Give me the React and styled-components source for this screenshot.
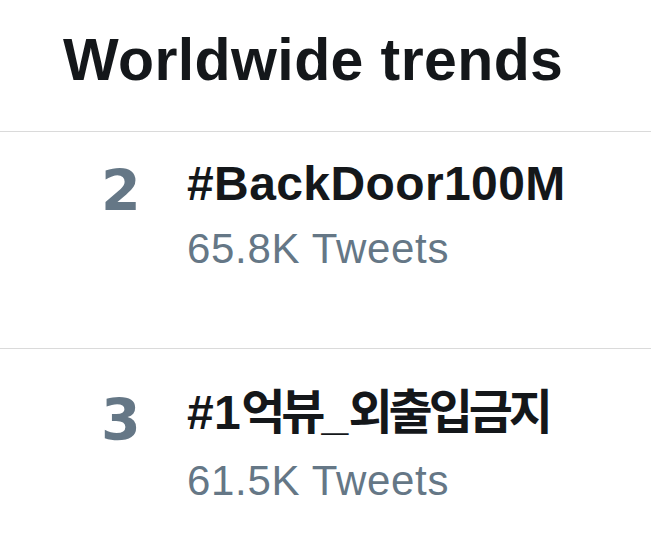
import React from "react";
import styled, { createGlobalStyle } from "styled-components";

const GlobalStyle = createGlobalStyle`
  html, body {
    margin: 0;
    padding: 0;
    background: #ffffff;
  }
  body {
    font-family: "Liberation Sans", "Noto Sans CJK KR", Arial, sans-serif;
    -webkit-font-smoothing: antialiased;
  }
`;

const Page = styled.div`
  width: 651px;
  min-height: 559px;
  background: #ffffff;
  overflow: hidden;
`;

const Header = styled.header`
  padding: 26px 0 37px 63px;
  border-bottom: 1px solid #dadada;
`;

const Title = styled.h1`
  margin: 0;
  font-family: "Liberation Sans", Arial, sans-serif;
  font-weight: 700;
  font-size: 59px;
  line-height: normal;
  color: #14171a;
  letter-spacing: 0.4px;
`;

const TrendRow = styled.div`
  display: flex;
  align-items: baseline;
  padding: 24px 0 75px 101px;
  border-bottom: 1px solid #dadada;
`;

const Rank = styled.div`
  flex: none;
  width: 86px;
  font-family: "DejaVu Sans", "Liberation Sans", sans-serif;
  font-weight: 700;
  font-size: 57px;
  line-height: 40px;
  color: #657786;
`;

const RankDigit = styled.span`
  vertical-align: -11px;
`;

const TrendBody = styled.div`
  display: flex;
  flex-direction: column;
`;

const Hashtag = styled.div`
  font-family: "Liberation Sans", "Noto Sans CJK KR", sans-serif;
  font-weight: 700;
  font-size: 48px;
  line-height: normal;
  letter-spacing: 0.4px;
  color: #14171a;
  white-space: nowrap;
`;

const Hangul = styled.span`
  font-family: "Noto Sans CJK KR", sans-serif;
  font-weight: 700;
  letter-spacing: -0.085em;
`;

const TweetCount = styled.div`
  margin-top: 14px;
  font-family: "Liberation Sans", Arial, sans-serif;
  font-weight: 400;
  font-size: 42px;
  line-height: normal;
  color: #657786;
  letter-spacing: 0.7px;
`;

const trends = [
  { rank: 2, tag: ["#BackDoor100M"], count: "65.8K Tweets" },
  {
    rank: 3,
    tag: ["#1", { k: "억뷰" }, "_", { k: "외출입금지" }],
    count: "61.5K Tweets",
  },
];

export default function App() {
  return (
    <Page>
      <GlobalStyle />
      <Header>
        <Title>Worldwide trends</Title>
      </Header>
      {trends.map((t) => (
        <TrendRow key={t.rank}>
          <Rank>
            <RankDigit>{t.rank}</RankDigit>
          </Rank>
          <TrendBody>
            <Hashtag>
              {t.tag.map((part, i) =>
                typeof part === "string" ? (
                  <React.Fragment key={i}>{part}</React.Fragment>
                ) : (
                  <Hangul key={i}>{part.k}</Hangul>
                )
              )}
            </Hashtag>
            <TweetCount>{t.count}</TweetCount>
          </TrendBody>
        </TrendRow>
      ))}
    </Page>
  );
}
